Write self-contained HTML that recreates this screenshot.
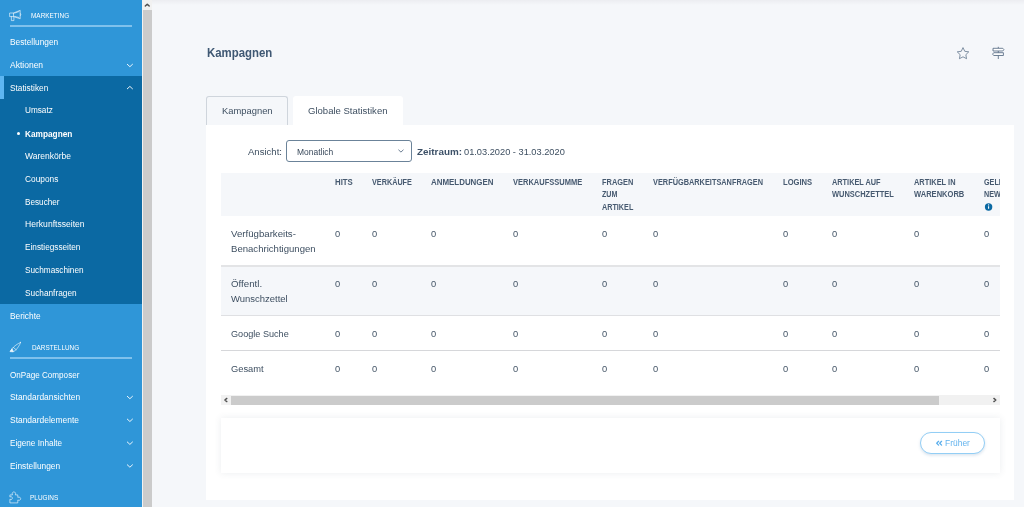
<!DOCTYPE html>
<html lang="de">
<head>
<meta charset="utf-8">
<title>Kampagnen</title>
<style>
*{box-sizing:border-box;margin:0;padding:0}
html,body{width:1024px;height:507px;overflow:hidden;background:#f5f7fa;font-family:"Liberation Sans",sans-serif}
body{position:relative}
.a{position:absolute}
.t{position:absolute;line-height:1;white-space:nowrap;transform-origin:0 0}
svg{position:absolute;overflow:visible}
#sb{left:0;top:0;width:142px;height:507px;background:#2f96d8}
#dark{left:0;top:76.1px;width:142px;height:227.6px;background:#0b69a3}
#accent{left:0;top:76.1px;width:3.9px;height:22.8px;background:#5db6f2}
.ln{left:9.8px;width:122.3px;height:1.6px;background:#7fc1ec}
#vs{left:142px;top:0;width:10px;height:507px;background:#f1f1f1}
#vth{left:143px;top:10px;width:9px;height:497px;background:#cbcbcb}
#topsh{left:152px;top:0;width:872px;height:5px;background:linear-gradient(#ecedf1,#f5f7fa)}
#t1{left:206px;top:95.5px;width:82px;height:30px;border:1px solid #cfd5dc;border-bottom:none;border-radius:3px 3px 0 0;background:#f5f7fa}
#t2{left:292.6px;top:95.5px;width:110.3px;height:30px;background:#fff;border-radius:3px 3px 0 0}
#card{left:206px;top:124.7px;width:808.3px;height:375.3px;background:#fff}
#sel{left:286px;top:140.3px;width:125.8px;height:22px;border:1px solid #6b8399;border-radius:3px;background:#fff}
#thead{left:221px;top:172.5px;width:779px;height:43.5px;background:#f5f7fa}
.rl{left:221px;width:779px;height:1px;background:#dde1e6}
#r2{left:221px;top:266.5px;width:779px;height:48.5px;background:#f5f7fa}
#hs{left:221px;top:395.2px;width:779px;height:9.5px;background:#f1f1f1}
#hth{left:231px;top:395.8px;width:708.2px;height:8.9px;background:#cbcbcb}
#foot{left:221px;top:417.5px;width:778.8px;height:55.7px;background:#fff;box-shadow:0 0 7px rgba(70,90,110,.11)}
#btn{left:920.2px;top:432px;width:64.8px;height:21.5px;border:1px solid #93cef5;border-radius:11px;background:#fff;box-shadow:0 1.5px 3px rgba(70,120,170,.20)}
#tx{position:absolute;left:0;top:0;width:1024px;height:507px;will-change:transform}
#clip{left:221px;top:172px;width:779px;height:44px;overflow:hidden;will-change:transform}
#clip .t{font-size:8.4px;line-height:10px;font-weight:bold;color:#475a70;transform:scaleX(.86)}
</style>
</head>
<body>
<div class="a" id="sb"></div>
<div class="a" id="dark"></div>
<div class="a" id="accent"></div>
<div class="a ln" style="top:25.1px"></div>
<div class="a ln" style="top:357.1px"></div>
<div class="a" style="left:17px;top:131.8px;width:3.2px;height:3.2px;border-radius:50%;background:#fff"></div>
<div class="a" id="vs"></div>
<div class="a" id="vth"></div>
<div class="a" id="topsh"></div>
<div class="a" id="t1"></div>
<div class="a" id="t2"></div>
<div class="a" id="card"></div>
<div class="a" id="sel"></div>
<div class="a" id="thead"></div>
<div class="a" id="r2"></div>
<div class="a rl" style="top:265px;height:2px;background:#e3e4e6"></div>
<div class="a rl" style="top:314.8px;height:1.7px;background:#dfe0e3"></div>
<div class="a rl" style="top:349.9px;height:1.3px;background:#d6d7da"></div>
<div class="a" id="hs"></div>
<div class="a" id="hth"></div>
<div class="a" id="foot"></div>
<div class="a" id="btn"></div>
<div class="a" id="clip">
<span class="t" style="left:762.7px;top:5px">GELESENE</span>
<span class="t" style="left:762.7px;top:17px">NEWSLETTER</span>
</div>
<svg style="left:0;top:0" width="1024" height="507" viewBox="0 0 1024 507" fill="none">
<!-- megaphone -->
<g stroke="#fff" stroke-opacity=".74" stroke-width=".8" stroke-linejoin="round" stroke-linecap="round">
<path d="M10 13h3.500v3.600H10z M13.500 13 L20.200 10.300 V18.800 L13.500 16.600 M11.400 16.600v4h2.500v-3.300 M20.200 13.300c.9.300.9 2.200 0 2.500 M14.600 13.100 19 11.600 M14.600 16.400 19 17.500"/>
<!-- brush -->
<path d="M20.600 342.400C17.600 343.600 13.800 346.500 12.300 348.300L10.300 351.300C12.300 351.700 14.200 351.500 15.300 350.500 17.400 348.500 19.900 345 20.600 342.400z M13.300 347.400 16.100 349.700"/>
<path d="M10.300 351.300 12.100 348.700 13.200 351.500z" fill="#fff" fill-opacity=".9"/>
<!-- puzzle -->
<path d="M9.900 502.500V499.200c1.700.9 2.500-.3 2.500-1.100s-.8-2-2.500-1.100V494.900h2.600c-.9-1.700.2-3 1.400-3s2.300 1.300 1.400 3h2.500v2.500c1.700-.9 2.900.2 2.900 1.300s-1.200 2.200-2.900 1.300v2.500z"/>
</g>
<!-- sidebar chevrons -->
<g stroke="#fff" stroke-opacity=".9" stroke-width="1" stroke-linecap="round" stroke-linejoin="round">
<path d="M127.300 64.300l2.600 2.400 2.600-2.400"/>
<path d="M127.300 88.800l2.600-2.400 2.600 2.400"/>
<path d="M127.300 396.300l2.600 2.400 2.600-2.400"/>
<path d="M127.300 419.100l2.600 2.400 2.600-2.400"/>
<path d="M127.300 442l2.600 2.400 2.600-2.400"/>
<path d="M127.300 464.800l2.600 2.400 2.600-2.400"/>
</g>
<!-- scrollbar arrows -->
<g stroke="#505050" stroke-width="1.450" stroke-linecap="round" stroke-linejoin="round">
<path d="M145.300 6.100l1.950-1.950 1.950 1.950"/>
<path d="M226.800 398.400l-1.900 1.600 1.900 1.600"/>
<path d="M993.900 398.400l1.900 1.600-1.900 1.600"/>
</g>
<!-- star -->
<path d="M963 47.600l1.750 3.700 4 .55-2.900 2.850.7 4-3.550-1.900-3.550 1.900.7-4-2.900-2.850 4-.55z" stroke="#5a6f87" stroke-width=".75" stroke-linejoin="round"/>
<!-- signpost -->
<g stroke="#566b83" stroke-width=".85" stroke-linejoin="round" stroke-linecap="round">
<path d="M998.300 47.200v1 M998.300 51.100v1.500 M998.300 55.600v3"/>
<path d="M993.400 48.300h9.400l1.100 1.350-1.100 1.350h-9.400z" fill="#fff"/>
<path d="M1003 52.700h-9.300l-1.100 1.400 1.100 1.400h9.300z" fill="#fbfcfd"/>
</g>
<!-- select chevron -->
<path d="M398.700 150l2.250 2.100 2.250-2.100" stroke="#51677f" stroke-width=".85" stroke-linecap="round" stroke-linejoin="round"/>
<!-- info -->
<circle cx="988.600" cy="207" r="3.700" fill="#0b69a3"/>
<path d="M988.600 206.300v2.500" stroke="#fff" stroke-width="1.100"/>
<circle cx="988.600" cy="204.900" r=".65" fill="#fff"/>
<!-- double chevron left -->
<g stroke="#5aaeec" stroke-width="1.250" stroke-linecap="round" stroke-linejoin="round">
<path d="M938.600 441.300l-1.900 1.900 1.900 1.900"/>
<path d="M941.600 441.300l-1.900 1.900 1.900 1.900"/>
</g>
</svg>

<div id="tx">
<span class="t" style="left:10.00px;top:37px;font-size:8.5px;line-height:10px;color:#fff;transform:scaleX(0.9805)">Bestellungen</span>
<span class="t" style="left:10.00px;top:60px;font-size:8.5px;line-height:10px;color:#fff;transform:scaleX(1.0002)">Aktionen</span>
<span class="t" style="left:10.00px;top:83px;font-size:8.5px;line-height:10px;color:#fff;transform:scaleX(0.9766)">Statistiken</span>
<span class="t" style="left:24.50px;top:105px;font-size:8.5px;line-height:10px;color:#fff;transform:scaleX(0.9649)">Umsatz</span>
<span class="t" style="left:24.60px;top:129px;font-size:8.5px;line-height:10px;color:#fff;transform:scaleX(0.9742);font-weight:bold">Kampagnen</span>
<span class="t" style="left:24.50px;top:151px;font-size:8.5px;line-height:10px;color:#fff;transform:scaleX(1.0025)">Warenkörbe</span>
<span class="t" style="left:24.50px;top:174px;font-size:8.5px;line-height:10px;color:#fff;transform:scaleX(0.9785)">Coupons</span>
<span class="t" style="left:24.50px;top:197px;font-size:8.5px;line-height:10px;color:#fff;transform:scaleX(0.9632)">Besucher</span>
<span class="t" style="left:24.50px;top:219px;font-size:8.5px;line-height:10px;color:#fff;transform:scaleX(1.0091)">Herkunftsseiten</span>
<span class="t" style="left:24.50px;top:242px;font-size:8.5px;line-height:10px;color:#fff;transform:scaleX(0.9690)">Einstiegsseiten</span>
<span class="t" style="left:24.50px;top:265px;font-size:8.5px;line-height:10px;color:#fff;transform:scaleX(0.9688)">Suchmaschinen</span>
<span class="t" style="left:24.50px;top:288px;font-size:8.5px;line-height:10px;color:#fff;transform:scaleX(0.9747)">Suchanfragen</span>
<span class="t" style="left:10.00px;top:311px;font-size:8.5px;line-height:10px;color:#fff;transform:scaleX(0.9812)">Berichte</span>
<span class="t" style="left:10.00px;top:370px;font-size:8.5px;line-height:10px;color:#fff;transform:scaleX(0.9537)">OnPage Composer</span>
<span class="t" style="left:10.00px;top:392px;font-size:8.5px;line-height:10px;color:#fff;transform:scaleX(0.9888)">Standardansichten</span>
<span class="t" style="left:10.00px;top:415px;font-size:8.5px;line-height:10px;color:#fff;transform:scaleX(0.9933)">Standardelemente</span>
<span class="t" style="left:10.00px;top:438px;font-size:8.5px;line-height:10px;color:#fff;transform:scaleX(0.9584)">Eigene Inhalte</span>
<span class="t" style="left:10.00px;top:461px;font-size:8.5px;line-height:10px;color:#fff;transform:scaleX(0.9815)">Einstellungen</span>
<span class="t" style="left:30.90px;top:12px;font-size:6.7px;line-height:7px;color:#fff;transform:scaleX(0.9606)">MARKETING</span>
<span class="t" style="left:31.80px;top:344px;font-size:6.7px;line-height:7px;color:#fff;transform:scaleX(0.9527)">DARSTELLUNG</span>
<span class="t" style="left:30.00px;top:494px;font-size:6.7px;line-height:7px;color:#fff;transform:scaleX(0.9639)">PLUGINS</span>
<span class="t" style="left:206.50px;top:46px;font-size:12.3px;line-height:14px;color:#3f5873;transform:scaleX(0.9277);font-weight:bold">Kampagnen</span>
<span class="t" style="left:221.90px;top:105px;font-size:9.6px;line-height:11px;color:#3e4f61;transform:scaleX(0.9778)">Kampagnen</span>
<span class="t" style="left:307.90px;top:105px;font-size:9.6px;line-height:11px;color:#3e4f61;transform:scaleX(0.9938)">Globale Statistiken</span>
<span class="t" style="left:247.60px;top:146px;font-size:9.6px;line-height:11px;color:#3e4f61;transform:scaleX(0.9959)">Ansicht:</span>
<span class="t" style="left:296.90px;top:147px;font-size:8.3px;line-height:10px;color:#3a4a5c;transform:scaleX(1.0193)">Monatlich</span>
<span class="t" style="left:416.80px;top:146px;font-size:9.6px;line-height:11px;color:#3d5168;transform:scaleX(1.0293);font-weight:bold">Zeitraum:</span>
<span class="t" style="left:464.00px;top:146px;font-size:9.6px;line-height:11px;color:#3e4f61;transform:scaleX(0.9640)">01.03.2020 - 31.03.2020</span>
<span class="t" style="left:335.20px;top:177px;font-size:8.4px;line-height:10px;color:#475a70;transform:scaleX(0.9330);font-weight:bold">HITS</span>
<span class="t" style="left:372.00px;top:177px;font-size:8.4px;line-height:10px;color:#475a70;transform:scaleX(0.8659);font-weight:bold">VERKÄUFE</span>
<span class="t" style="left:431.20px;top:177px;font-size:8.4px;line-height:10px;color:#475a70;transform:scaleX(0.9459);font-weight:bold">ANMELDUNGEN</span>
<span class="t" style="left:513.20px;top:177px;font-size:8.4px;line-height:10px;color:#475a70;transform:scaleX(0.8958);font-weight:bold">VERKAUFSSUMME</span>
<span class="t" style="left:602.10px;top:177px;font-size:8.4px;line-height:10px;color:#475a70;transform:scaleX(0.8848);font-weight:bold">FRAGEN</span>
<span class="t" style="left:602.10px;top:189px;font-size:8.4px;line-height:10px;color:#475a70;transform:scaleX(0.8489);font-weight:bold">ZUM</span>
<span class="t" style="left:602.10px;top:202px;font-size:8.4px;line-height:10px;color:#475a70;transform:scaleX(0.8623);font-weight:bold">ARTIKEL</span>
<span class="t" style="left:652.90px;top:177px;font-size:8.4px;line-height:10px;color:#475a70;transform:scaleX(0.8788);font-weight:bold">VERFÜGBARKEITSANFRAGEN</span>
<span class="t" style="left:782.70px;top:177px;font-size:8.4px;line-height:10px;color:#475a70;transform:scaleX(0.9094);font-weight:bold">LOGINS</span>
<span class="t" style="left:831.80px;top:177px;font-size:8.4px;line-height:10px;color:#475a70;transform:scaleX(0.8777);font-weight:bold">ARTIKEL AUF</span>
<span class="t" style="left:831.80px;top:189px;font-size:8.4px;line-height:10px;color:#475a70;transform:scaleX(0.8914);font-weight:bold">WUNSCHZETTEL</span>
<span class="t" style="left:913.50px;top:177px;font-size:8.4px;line-height:10px;color:#475a70;transform:scaleX(0.8859);font-weight:bold">ARTIKEL IN</span>
<span class="t" style="left:913.50px;top:189px;font-size:8.4px;line-height:10px;color:#475a70;transform:scaleX(0.9007);font-weight:bold">WARENKORB</span>
<span class="t" style="left:230.90px;top:228px;font-size:9.6px;line-height:11px;color:#3e4f61;transform:scaleX(1.0057)">Verfügbarkeits-</span>
<span class="t" style="left:230.90px;top:243px;font-size:9.6px;line-height:11px;color:#3e4f61;transform:scaleX(0.9975)">Benachrichtigungen</span>
<span class="t" style="left:230.90px;top:278px;font-size:9.6px;line-height:11px;color:#3e4f61;transform:scaleX(1.0141)">Öffentl.</span>
<span class="t" style="left:230.90px;top:293px;font-size:9.6px;line-height:11px;color:#3e4f61;transform:scaleX(0.9874)">Wunschzettel</span>
<span class="t" style="left:230.90px;top:328px;font-size:9.6px;line-height:11px;color:#3e4f61;transform:scaleX(0.9488)">Google Suche</span>
<span class="t" style="left:230.90px;top:363px;font-size:9.6px;line-height:11px;color:#3e4f61;transform:scaleX(0.9704)">Gesamt</span>
<span class="t" style="left:335.30px;top:228px;font-size:9.8px;line-height:11px;color:#445567;transform:scaleX(0.9536)">0</span>
<span class="t" style="left:372.00px;top:228px;font-size:9.8px;line-height:11px;color:#445567;transform:scaleX(0.9536)">0</span>
<span class="t" style="left:431.20px;top:228px;font-size:9.8px;line-height:11px;color:#445567;transform:scaleX(0.9536)">0</span>
<span class="t" style="left:513.20px;top:228px;font-size:9.8px;line-height:11px;color:#445567;transform:scaleX(0.9536)">0</span>
<span class="t" style="left:602.10px;top:228px;font-size:9.8px;line-height:11px;color:#445567;transform:scaleX(0.9536)">0</span>
<span class="t" style="left:652.90px;top:228px;font-size:9.8px;line-height:11px;color:#445567;transform:scaleX(0.9536)">0</span>
<span class="t" style="left:782.70px;top:228px;font-size:9.8px;line-height:11px;color:#445567;transform:scaleX(0.9536)">0</span>
<span class="t" style="left:831.80px;top:228px;font-size:9.8px;line-height:11px;color:#445567;transform:scaleX(0.9536)">0</span>
<span class="t" style="left:913.50px;top:228px;font-size:9.8px;line-height:11px;color:#445567;transform:scaleX(0.9536)">0</span>
<span class="t" style="left:983.50px;top:228px;font-size:9.8px;line-height:11px;color:#445567;transform:scaleX(0.9536)">0</span>
<span class="t" style="left:335.30px;top:278px;font-size:9.8px;line-height:11px;color:#445567;transform:scaleX(0.9536)">0</span>
<span class="t" style="left:372.00px;top:278px;font-size:9.8px;line-height:11px;color:#445567;transform:scaleX(0.9536)">0</span>
<span class="t" style="left:431.20px;top:278px;font-size:9.8px;line-height:11px;color:#445567;transform:scaleX(0.9536)">0</span>
<span class="t" style="left:513.20px;top:278px;font-size:9.8px;line-height:11px;color:#445567;transform:scaleX(0.9536)">0</span>
<span class="t" style="left:602.10px;top:278px;font-size:9.8px;line-height:11px;color:#445567;transform:scaleX(0.9536)">0</span>
<span class="t" style="left:652.90px;top:278px;font-size:9.8px;line-height:11px;color:#445567;transform:scaleX(0.9536)">0</span>
<span class="t" style="left:782.70px;top:278px;font-size:9.8px;line-height:11px;color:#445567;transform:scaleX(0.9536)">0</span>
<span class="t" style="left:831.80px;top:278px;font-size:9.8px;line-height:11px;color:#445567;transform:scaleX(0.9536)">0</span>
<span class="t" style="left:913.50px;top:278px;font-size:9.8px;line-height:11px;color:#445567;transform:scaleX(0.9536)">0</span>
<span class="t" style="left:983.50px;top:278px;font-size:9.8px;line-height:11px;color:#445567;transform:scaleX(0.9536)">0</span>
<span class="t" style="left:335.30px;top:328px;font-size:9.8px;line-height:11px;color:#445567;transform:scaleX(0.9536)">0</span>
<span class="t" style="left:372.00px;top:328px;font-size:9.8px;line-height:11px;color:#445567;transform:scaleX(0.9536)">0</span>
<span class="t" style="left:431.20px;top:328px;font-size:9.8px;line-height:11px;color:#445567;transform:scaleX(0.9536)">0</span>
<span class="t" style="left:513.20px;top:328px;font-size:9.8px;line-height:11px;color:#445567;transform:scaleX(0.9536)">0</span>
<span class="t" style="left:602.10px;top:328px;font-size:9.8px;line-height:11px;color:#445567;transform:scaleX(0.9536)">0</span>
<span class="t" style="left:652.90px;top:328px;font-size:9.8px;line-height:11px;color:#445567;transform:scaleX(0.9536)">0</span>
<span class="t" style="left:782.70px;top:328px;font-size:9.8px;line-height:11px;color:#445567;transform:scaleX(0.9536)">0</span>
<span class="t" style="left:831.80px;top:328px;font-size:9.8px;line-height:11px;color:#445567;transform:scaleX(0.9536)">0</span>
<span class="t" style="left:913.50px;top:328px;font-size:9.8px;line-height:11px;color:#445567;transform:scaleX(0.9536)">0</span>
<span class="t" style="left:983.50px;top:328px;font-size:9.8px;line-height:11px;color:#445567;transform:scaleX(0.9536)">0</span>
<span class="t" style="left:335.30px;top:363px;font-size:9.8px;line-height:11px;color:#445567;transform:scaleX(0.9536)">0</span>
<span class="t" style="left:372.00px;top:363px;font-size:9.8px;line-height:11px;color:#445567;transform:scaleX(0.9536)">0</span>
<span class="t" style="left:431.20px;top:363px;font-size:9.8px;line-height:11px;color:#445567;transform:scaleX(0.9536)">0</span>
<span class="t" style="left:513.20px;top:363px;font-size:9.8px;line-height:11px;color:#445567;transform:scaleX(0.9536)">0</span>
<span class="t" style="left:602.10px;top:363px;font-size:9.8px;line-height:11px;color:#445567;transform:scaleX(0.9536)">0</span>
<span class="t" style="left:652.90px;top:363px;font-size:9.8px;line-height:11px;color:#445567;transform:scaleX(0.9536)">0</span>
<span class="t" style="left:782.70px;top:363px;font-size:9.8px;line-height:11px;color:#445567;transform:scaleX(0.9536)">0</span>
<span class="t" style="left:831.80px;top:363px;font-size:9.8px;line-height:11px;color:#445567;transform:scaleX(0.9536)">0</span>
<span class="t" style="left:913.50px;top:363px;font-size:9.8px;line-height:11px;color:#445567;transform:scaleX(0.9536)">0</span>
<span class="t" style="left:983.50px;top:363px;font-size:9.8px;line-height:11px;color:#445567;transform:scaleX(0.9536)">0</span>
<span class="t" style="left:945.00px;top:438px;font-size:8.3px;line-height:10px;color:#62b3ee;transform:scaleX(1.0189)">Früher</span>
</div>
</body>
</html>
